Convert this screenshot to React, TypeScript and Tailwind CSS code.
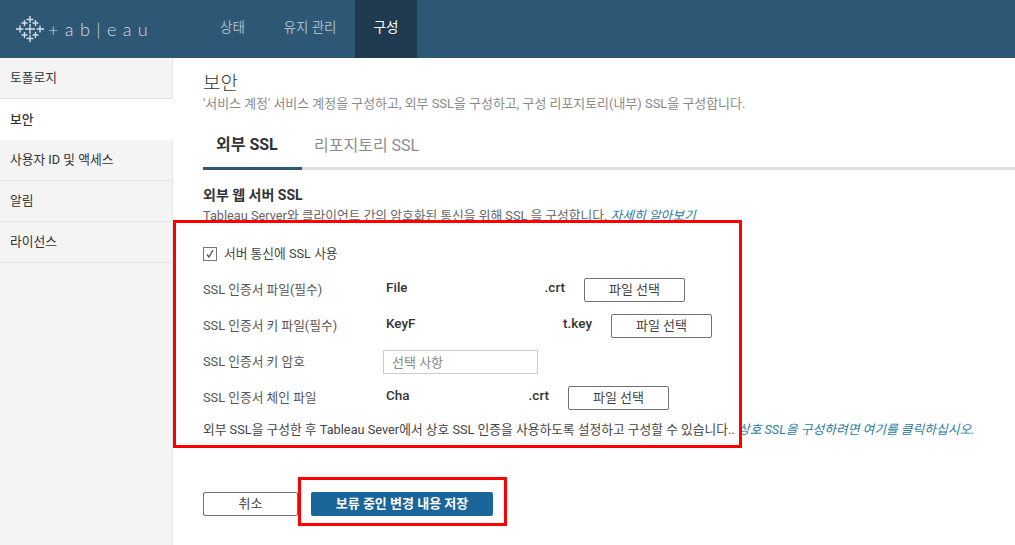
import React from 'react';

const font = 'font-[Roboto,"Noto_Sans_CJK_KR",sans-serif]';

const marks: [number, number, number][] = [
    [14, 14, 5], [14, 4.5, 3.4], [14, 23.5, 3.4], [4, 14, 3.4], [24, 14, 3.4],
    [8.5, 8, 3], [19.5, 8, 3], [8.5, 20, 3], [19.5, 20, 3],
    [0.8, 14, 0.8], [27.2, 14, 0.8],
];

function LogoMark() {
    return (
        <svg width="28" height="28" viewBox="0 0 28 28" className="shrink-0">
            {marks.map(([x, y, r], i) => (
                <path key={i} d={`M${x - r} ${y}H${x + r}M${x} ${y - r}V${y + r}`} stroke="#d5dde3" strokeWidth="1.4" fill="none" />
            ))}
        </svg>
    );
}

function NavBar() {
    return (
        <header className="flex h-[58px] bg-[#2c5775]">
            <div className="flex w-[200px] items-center pl-[16px]">
                <LogoMark />
                <span className="ml-[4px] font-['Lato',sans-serif] text-[18px] font-light tracking-[6.4px] whitespace-nowrap text-[#d3dbe1]">+ab|eau</span>
            </div>
            <nav className="flex text-[13.5px]">
                <a className="flex w-[61px] items-center justify-center pb-[4px] pl-[4px] text-[#a5b9c6]">상태</a>
                <a className="flex w-[94px] items-center justify-center pb-[4px] pl-[4px] text-[#a5b9c6]">유지 관리</a>
                <a className="flex w-[62px] items-center justify-center bg-[#1f3a4e] pb-[4px] text-white">구성</a>
            </nav>
        </header>
    );
}

function SideBar() {
    const items = ['토폴로지', '보안', '사용자 ID 및 액세스', '알림', '라이선스'];
    return (
        <aside className="w-[173px] shrink-0 border-r border-[#e6e6e6] bg-[#f4f4f4] text-[12.75px] text-[#333]">
            {items.map((item) => (
                item === '보안'
                    ? <div key={item} className="-mr-px flex h-[41px] items-center bg-white pl-[10px] font-medium">{item}</div>
                    : <div key={item} className="flex h-[41px] items-center border-b border-[#e3e3e3] pl-[10px]">{item}</div>
            ))}
        </aside>
    );
}

function FileButton() {
    return (
        <button className="h-[24px] w-[101px] shrink-0 rounded-[2px] border border-[#707070] bg-white text-[13px] text-[#444]">파일 선택</button>
    );
}

function FileRow({label, start, end, width, clip}: {label: string, start: string, end: string, width: string, clip: string}) {
    return (
        <div className="flex h-[24px] items-center">
            <label className="w-[183px] shrink-0 text-[12.75px] text-[#555]">{label}</label>
            <div className={`flex ${width} -mt-[5px] justify-between pr-[19px] text-[13.5px] font-medium text-[#333]`}>
                <span className={`${clip} overflow-hidden whitespace-nowrap`}>{start}</span>
                <span>{end}</span>
            </div>
            <FileButton />
        </div>
    );
}

export default function App() {
    return (
        <div className={`relative h-[545px] w-[1015px] overflow-hidden bg-white ${font}`}>
            <NavBar />
            <div className="flex h-[487px]">
                <SideBar />
                <main className="flex-1 pt-[15px] pl-[30px]">
                    <h1 className="text-[19px] leading-[22px] font-light text-[#333]">보안</h1>
                    <p className="mt-[1px] text-[12.95px] leading-[16px] whitespace-nowrap text-[#8a8a8a]">'서비스 계정' 서비스 계정을 구성하고, 외부 SSL을 구성하고, 구성 리포지토리(내부) SSL을 구성합니다.</p>

                    <div className="mt-[17px] flex h-[41px] border-b-[3px] border-[#dedede]">
                        <div className="-mb-[3px] flex h-[41px] w-[99px] items-center border-b-[3px] border-[#2c5775] pb-[6px] pl-[13px] text-[16px] font-bold text-[#333]">외부 SSL</div>
                        <div className="flex items-center pb-[5px] pl-[12px] text-[16px] text-[#8c8c8c]">리포지토리 SSL</div>
                    </div>

                    <h2 className="mt-[17px] text-[14px] leading-[16px] font-bold text-[#333]">외부 웹 서버 SSL</h2>
                    <p className="mt-[5px] text-[12.75px] leading-[16px] whitespace-nowrap text-[#666]">
                        Tableau Server와 클라이언트 간의 암호화된 통신을 위해 SSL 을 구성합니다. <a className="text-[#2b7a9e] italic">자세히 알아보기</a>
                    </p>

                    <label className="mt-[22px] flex h-[16px] items-center text-[12.75px] text-[#444]">
                        <span className="flex h-[14px] w-[14px] items-center justify-center border border-[#777] bg-white">
                            <svg width="10" height="10" viewBox="0 0 10 10"><path d="M2 5.5 4 8 8 1" fill="none" stroke="#555" strokeWidth="1.3" /></svg>
                        </span>
                        <span className="ml-[7px]">서버 통신에 SSL 사용</span>
                    </label>

                    <div className="mt-[16px] flex flex-col gap-[12px]">
                        <FileRow label="SSL 인증서 파일(필수)" start="File" end=".crt" width="w-[198px]" clip="w-[21px]" />
                        <FileRow label="SSL 인증서 키 파일(필수)" start="KeyF" end="t.key" width="w-[225px]" clip="w-[32px]" />
                        <div className="flex h-[24px] items-center">
                            <label className="w-[180px] shrink-0 text-[12.75px] text-[#555]">SSL 인증서 키 암호</label>
                            <input readOnly placeholder="선택 사항" className="h-[24px] w-[155px] border border-[#ccc] px-[8px] text-[13px] outline-none placeholder:text-[#888]" />
                        </div>
                        <FileRow label="SSL 인증서 체인 파일" start="Cha" end=".crt" width="w-[182px]" clip="w-[24px]" />
                    </div>

                    <p className="mt-[12px] text-[12.75px] leading-[16px] whitespace-nowrap text-[#444]">
                        외부 SSL을 구성한 후 Tableau Sever에서 상호 SSL 인증을 사용하도록 설정하고 구성할 수 있습니다.. <a className="text-[#2b7a9e] italic">상호 SSL을 구성하려면 여기를 클릭하십시오.</a>
                    </p>

                    <div className="mt-[54px] flex gap-[13px]">
                        <button className="h-[24px] w-[95px] rounded-[2px] border border-[#707070] bg-white text-[13px] text-[#444]">취소</button>
                        <button className="h-[24px] w-[182px] rounded-[2px] bg-[#1a6599] text-[13px] font-bold text-white">보류 중인 변경 내용 저장</button>
                    </div>
                </main>
            </div>

            {/* red annotation boxes over the screenshot */}
            <div className="absolute top-[220px] left-[173px] h-[228px] w-[569px] border-[3px] border-[#ff0000]" />
            <div className="absolute top-[477px] left-[298px] h-[49px] w-[209px] border-[3px] border-[#ff0000]" />
        </div>
    );
}
